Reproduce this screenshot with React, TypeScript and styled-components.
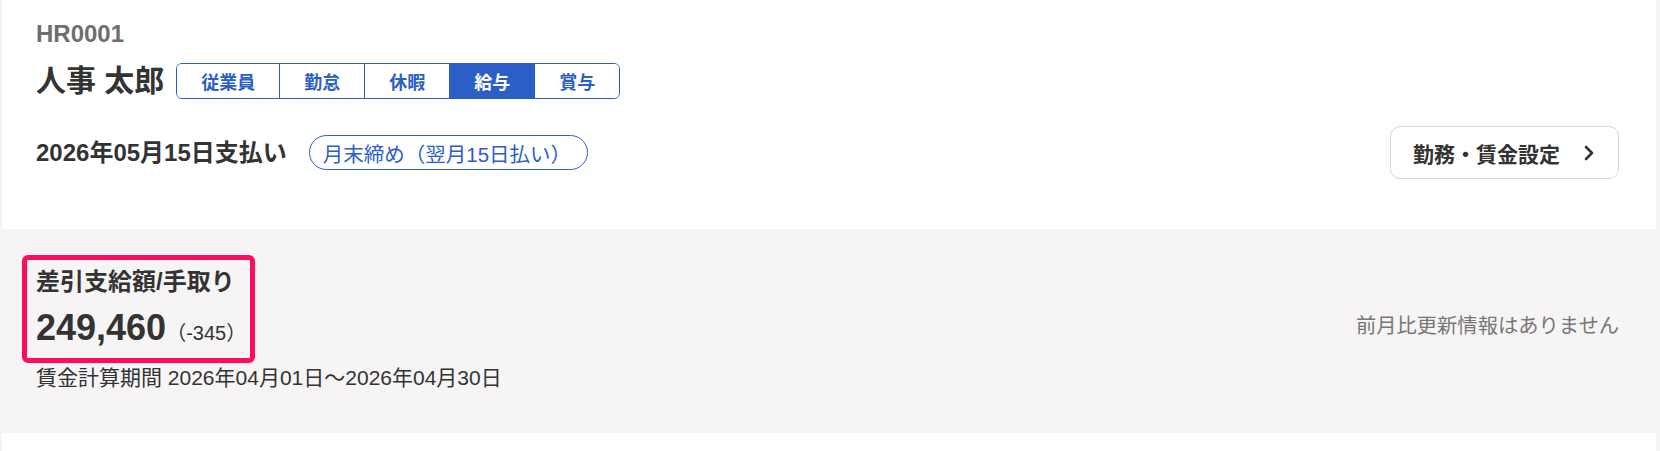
import styled, { createGlobalStyle } from 'styled-components';

const GlobalStyle = createGlobalStyle`
  body {
    margin: 0;
    background: #f4f4f4;
    font-family: "Liberation Sans", "Noto Sans CJK JP", sans-serif;
    color: #333333;
  }
`;

const tabs = ['従業員', '勤怠', '休暇', '給与', '賞与'];

function ChevronRight() {
    return (
        <svg width="10" height="16" viewBox="0 0 10 16" fill="none">
            <polyline points="2,2 8,8 2,14" stroke="#333" strokeWidth="2.6" strokeLinecap="round" strokeLinejoin="round" />
        </svg>
    );
}

export default function App() {
    return (
        <>
            <GlobalStyle />
            <Page>
                <Header>
                    <EmployeeCode>HR0001</EmployeeCode>
                    <NameRow>
                        <Name>人事 太郎</Name>
                        <Tabs>
                            {tabs.map((t) => (
                                <Tab key={t} $active={t === '給与'}>{t}</Tab>
                            ))}
                        </Tabs>
                    </NameRow>
                    <PayRow>
                        <PayDate>2026年05月15日支払い</PayDate>
                        <Pill>月末締め（翌月15日払い）</Pill>
                        <SettingButton>
                            勤務・賃金設定
                            <ChevronRight />
                        </SettingButton>
                    </PayRow>
                </Header>
                <Summary>
                    <SummaryMain>
                        <Highlight>
                            <Label>差引支給額/手取り</Label>
                            <Amount>
                                <Value>249,460</Value>
                                <Delta>（-345）</Delta>
                            </Amount>
                        </Highlight>
                        <Period>賃金計算期間 2026年04月01日～2026年04月30日</Period>
                    </SummaryMain>
                    <Note>前月比更新情報はありません</Note>
                </Summary>
            </Page>
        </>
    );
}

const Page = styled.div`
  margin: 0 4px 0 2px;
  min-height: 451px;
  background: #ffffff;
`;

const Header = styled.div`
  padding: 20px 37px 50px 34px;
`;

const EmployeeCode = styled.div`
  font-size: 24px;
  font-weight: 700;
  line-height: 28px;
  color: #6e6e6e;
`;

const NameRow = styled.div`
  display: flex;
  align-items: center;
  gap: 12px;
  margin-top: 15px;
`;

const Name = styled.h1`
  margin: 0;
  font-size: 30px;
  font-weight: 700;
  line-height: 36px;
  color: #333;
`;

const Tabs = styled.div`
  display: flex;
  height: 36px;
  box-sizing: border-box;
  border: 1px solid #2c5ec8;
  border-radius: 6px;
  overflow: hidden;
`;

const Tab = styled.div<{ $active?: boolean }>`
  display: flex;
  align-items: center;
  padding: 0 24px;
  font-size: 18px;
  font-weight: 700;
  color: ${({ $active }) => ($active ? '#ffffff' : '#2c5ec8')};
  background: ${({ $active }) => ($active ? '#2c5ec8' : '#ffffff')};

  & + & {
    border-left: 1px solid #2c5ec8;
  }
`;

const PayRow = styled.div`
  display: flex;
  align-items: center;
  gap: 22px;
  margin-top: 27px;
`;

const PayDate = styled.div`
  font-size: 24px;
  font-weight: 700;
  line-height: 30px;
`;

const Pill = styled.div`
  display: flex;
  align-items: center;
  height: 35px;
  box-sizing: border-box;
  padding: 0 16px 0 13px;
  border: 1px solid #2c5ec8;
  border-radius: 999px;
  font-size: 20.5px;
  color: #2c5ec8;
`;

const SettingButton = styled.button`
  margin-left: auto;
  display: flex;
  align-items: center;
  gap: 24px;
  height: 53px;
  padding: 0 24px 0 22px;
  border: 1px solid #d6d6d6;
  border-radius: 10px;
  background: #ffffff;
  font-family: inherit;
  font-size: 21px;
  font-weight: 700;
  color: #333;
`;

const Summary = styled.div`
  display: flex;
  align-items: center;
  justify-content: space-between;
  padding: 26px 37px 41px 20px;
  background: #f6f4f5;
`;

const SummaryMain = styled.div`
  display: flex;
  flex-direction: column;
  align-items: flex-start;
`;

const Highlight = styled.div`
  padding: 6px 4px 5px 9px;
  border: 5px solid #ff0d5c;
  border-radius: 6px;
`;

const Label = styled.div`
  font-size: 24px;
  font-weight: 700;
  line-height: 32px;
`;

const Amount = styled.div`
  display: flex;
  align-items: baseline;
  margin-top: 10px;
  line-height: 40px;
`;

const Value = styled.span`
  font-size: 36px;
  font-weight: 700;
`;

const Delta = styled.span`
  font-size: 20px;
`;

const Period = styled.div`
  margin-top: 1px;
  padding-left: 14px;
  font-size: 21px;
  line-height: 28px;
`;

const Note = styled.div`
  font-size: 20.3px;
  color: #777;
`;
